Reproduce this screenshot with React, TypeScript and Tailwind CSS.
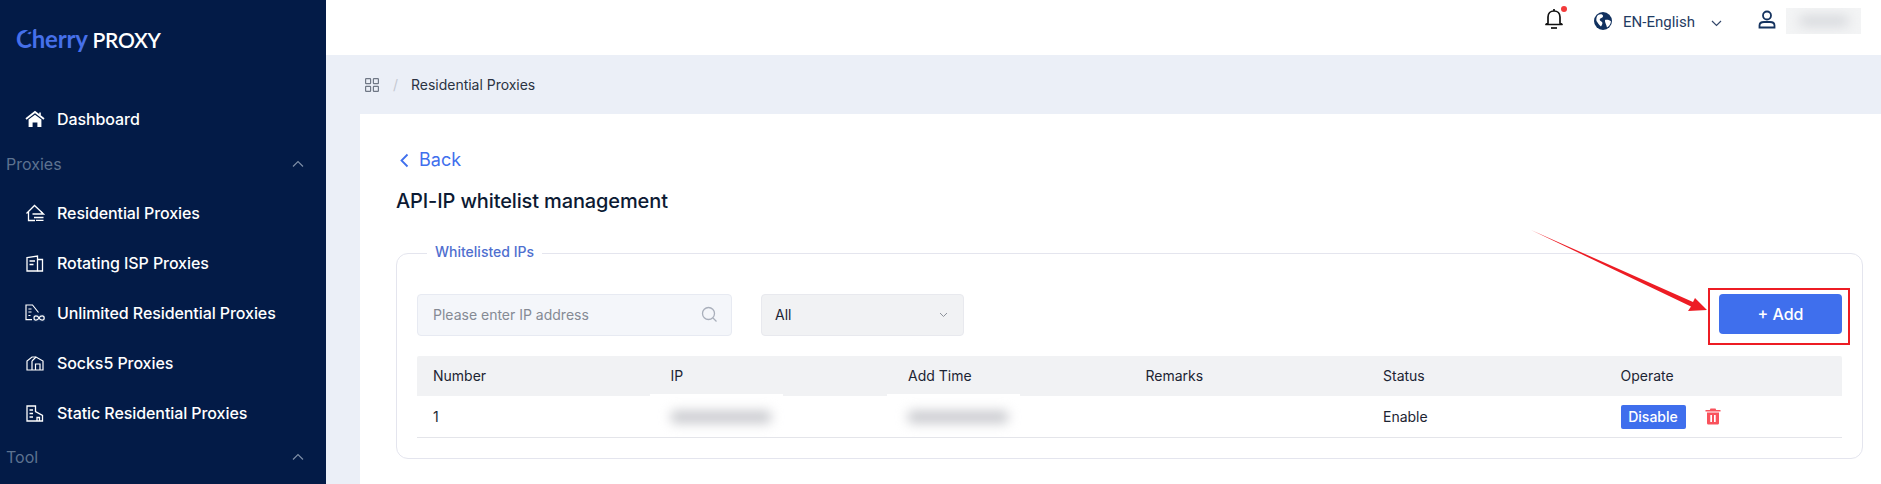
import React from "react";

const inter = { fontFamily: "Inter, sans-serif" };

function HomeSolid() {
  return (
    <svg width="20" height="18" viewBox="0 0 20 18" fill="none">
      <path d="M1 9 L10 2 L19 9" stroke="#fff" strokeWidth="1.8" />
      <path d="M15 2.5 V5" stroke="#fff" strokeWidth="1.6" />
      <path d="M3.6 9.6 L10 4.7 L16.4 9.6 V17 H12.4 V12.6 H7.6 V17 H3.6 Z" fill="#fff" />
    </svg>
  );
}
function HomeLine() {
  return (
    <svg width="20" height="18" viewBox="0 0 20 18" fill="none" stroke="#fff" strokeWidth="1.3">
      <path d="M1.5 9.5 L9.5 1.5 L17.5 9" />
      <path d="M3.5 8 V16.5 H10" />
      <path d="M7.5 10 H18.5 L16 7.8" />
      <path d="M18.5 13.5 H9 M18.5 16.3 H11" />
    </svg>
  );
}
function DocColumn() {
  return (
    <svg width="18" height="17" viewBox="0 0 18 17" fill="none" stroke="#fff" strokeWidth="1.3">
      <path d="M1 2.6 L11.5 1 V16 H1 Z" />
      <path d="M11.5 4.5 H16.5 V16 H11.5" />
      <path d="M3.5 6 H9 M3.5 9.5 H7.5" />
    </svg>
  );
}
function DocInfinity() {
  return (
    <svg width="20" height="18" viewBox="0 0 20 18" fill="none" stroke="#fff" strokeWidth="1.2">
      <path d="M7 15.6 H1 V1 H7.5 L13.5 8.5" />
      <path d="M3.4 5 H6.5 M3.4 8 H6.5 M3.4 11.5 H5.5" />
      <rect x="8" y="10" width="12" height="8" fill="#0c2552" stroke="none" />
      <path d="M14 14 C12.6 11.2 9 11.2 9 14 C9 16.8 12.6 16.8 14 14 C15.4 11.2 19.2 11.2 19.2 14 C19.2 16.8 15.4 16.8 14 14 Z" />
    </svg>
  );
}
function Building() {
  return (
    <svg width="18" height="15" viewBox="0 0 18 15" fill="none" stroke="#fff" strokeWidth="1.2">
      <path d="M1 14 V5 L6 1 H10 L17 5 V14 Z" />
      <path d="M6 14 V5 M6 5 L10 1" />
      <path d="M9.5 14 V8 H14 V14" />
    </svg>
  );
}
function DocHouse() {
  return (
    <svg width="18" height="17" viewBox="0 0 18 17" fill="none" stroke="#fff" strokeWidth="1.3">
      <path d="M1 16 V1 H9.5 V6.5 L16.5 10.5 V16 Z" />
      <path d="M3.5 5 H7 M3.5 8.5 H7 M3.5 12 H7" />
      <path d="M11 16 V12.5 H13.5 V16" />
    </svg>
  );
}
function Chevron({ className, color }: { className?: string; color: string }) {
  return (
    <svg className={className} width="12" height="8" viewBox="0 0 12 8" fill="none" stroke={color} strokeWidth="1.2">
      <path d="M1 6.5 L6 1.5 L11 6.5" />
    </svg>
  );
}

function NavItem({ icon, label }: { icon: React.ReactNode; label: string }) {
  return (
    <div className="flex h-[50px] shrink-0 items-center pl-[25px]">
      <span className="flex w-[20px] justify-center">{icon}</span>
      <span className="ml-[12px] text-[16px] font-medium tracking-[-0.08px] text-white">{label}</span>
    </div>
  );
}
function Group({ label, className }: { label: string; className?: string }) {
  return (
    <div className={`flex h-[40px] shrink-0 items-center justify-between pl-[6px] pr-[22px] ${className ?? ""}`}>
      <span className="text-[16px] text-[#5d7290]">{label}</span>
      <Chevron color="#7d8da6" />
    </div>
  );
}

function Sidebar() {
  return (
    <aside className="flex h-full w-[326px] shrink-0 flex-col overflow-hidden bg-[#031b47]">
      <div className="flex h-[94px] shrink-0 items-baseline pl-[16px] pt-[27px]">
        <span className="relative text-[24px] font-bold leading-none tracking-[-0.2px] text-[#4670ea]" style={{ fontFamily: "Lato, sans-serif" }}>
          Cherry
          <svg className="absolute left-[7px] top-[0px]" width="12" height="9" viewBox="0 0 12 9" fill="none" stroke="#031b47" strokeWidth="2">
            <path d="M1 8 C3 4 8 4 11 1" />
          </svg>
        </span>
        <span className="ml-[5px] text-[21px] font-semibold leading-none tracking-[-0.3px] text-white" style={{ fontFamily: "Lato, sans-serif" }}>PROXY</span>
      </div>
      <NavItem icon={<HomeSolid />} label="Dashboard" />
      <Group label="Proxies" className="mb-[4px]" />
      <NavItem icon={<HomeLine />} label="Residential Proxies" />
      <NavItem icon={<DocColumn />} label="Rotating ISP Proxies" />
      <NavItem icon={<DocInfinity />} label="Unlimited Residential Proxies" />
      <NavItem icon={<Building />} label="Socks5 Proxies" />
      <NavItem icon={<DocHouse />} label="Static Residential Proxies" />
      <Group label="Tool" className="-mt-[1px]" />
    </aside>
  );
}

function Header() {
  return (
    <header className="flex h-[55px] shrink-0 items-start justify-end bg-white pr-[20px]">
      <div className="relative mt-[8px]">
        <svg width="20" height="21" viewBox="0 0 20 21" fill="none" stroke="#111" strokeWidth="1.7">
          <path d="M4 15 V9 C4 5.5 6.5 3 10 3 C13.5 3 16 5.5 16 9 V15 L18 16.5 H2 Z" strokeLinejoin="round" />
          <path d="M10 1 V3" />
          <path d="M7 20 H13" />
        </svg>
        <span className="absolute right-[-3px] top-[-2px] h-[6px] w-[6px] rounded-full bg-[#f33a3a]" />
      </div>
      <svg className="ml-[29px] mt-[11px]" width="20" height="20" viewBox="0 0 20 20">
        <circle cx="10" cy="10" r="9" fill="#11315f" />
        <path d="M5 4 C7 3 10 3 10 5 C10 7 8 6.5 7 8 C6 9.5 8 10 9 11 C10 12 9 14 8 15.5 C6 14 5 12 3.5 10 C3 8 3.5 5.5 5 4 Z M12 9 C14 8.5 17 9 18 10.5 C17.5 13.5 16 15.5 14 16.5 C13.5 14 11.5 11 12 9 Z" fill="#fff" />
      </svg>
      <span className="ml-[10px] mt-[13px] text-[15px] leading-[18px] text-[#1f3b63]" style={{ fontFamily: "Roboto, sans-serif" }}>EN-English</span>
      <svg className="ml-[16px] mt-[20px]" width="11" height="7" viewBox="0 0 11 7" fill="none" stroke="#33476a" strokeWidth="1.2">
        <path d="M1 1 L5.5 5.5 L10 1" />
      </svg>
      <svg className="ml-[36px] mt-[10px]" width="18" height="19" viewBox="0 0 18 19" fill="none" stroke="#15335f" strokeWidth="1.8">
        <circle cx="9" cy="5.5" r="4" />
        <path d="M1.5 17.5 V15.5 C1.5 13 3.5 12 6 12 H12 C14.5 12 16.5 13 16.5 15.5 V17.5 Z" />
      </svg>
      <div className="ml-[10px] mt-[8px] flex h-[26px] w-[75px] items-center justify-center overflow-hidden bg-[#f3f4f5]">
        <div className="h-[10px] w-[50px] rounded-full bg-[#d4d6da] blur-[6px]" />
      </div>
    </header>
  );
}

function BlurText() {
  return (
    <div className="flex h-[38px] w-[133px] -translate-x-[21px] -translate-y-[4px] items-center bg-white pl-[21px]">
      <div className="h-[12px] w-[100px] translate-y-[4px] rounded-sm bg-[#c6c7cc] blur-[6px]" />
    </div>
  );
}

function Table() {
  const heads = ["Number", "IP", "Add Time", "Remarks", "Status", "Operate"];
  return (
    <div className="mt-[20px]">
      <div className="grid h-[40px] grid-cols-6 items-center rounded-t-[2px] bg-[#f1f2f4] pb-[1px] text-[14px] text-[#1c2433]">
        {heads.map((h) => (
          <div key={h} className="pl-[16px]">{h}</div>
        ))}
      </div>
      <div className="grid h-[42px] grid-cols-6 items-center border-b border-[#e4e5ea] text-[14px] text-[#1c2433]">
        <div className="pl-[16px]">1</div>
        <div className="pl-[16px]"><BlurText /></div>
        <div className="pl-[16px]"><BlurText /></div>
        <div />
        <div className="pl-[16px]">Enable</div>
        <div className="flex items-center pl-[16px]">
          <button className="flex h-[24px] w-[65px] items-center justify-center rounded-[2px] bg-[#3f6fed] text-[14px] font-medium text-white">Disable</button>
          <svg className="ml-[19px]" width="16" height="17" viewBox="0 0 16 17">
            <path d="M5.5 0.5 H10.5 L11.2 2 H15.5 V3.6 H0.5 V2 H4.8 Z" fill="#f9525c" />
            <path fillRule="evenodd" d="M2 4.6 H14 V15 C14 16 13.2 16.6 12.4 16.6 H3.6 C2.8 16.6 2 16 2 15 Z M5.3 7 V14 H7 V7 Z M9 7 V14 H10.7 V7 Z" fill="#f9525c" />
          </svg>
        </div>
      </div>
    </div>
  );
}

function Content() {
  return (
    <section className="relative ml-[34px] flex-1 bg-white pl-[36px] pr-[18px]">
      <div className="mt-[36px] flex h-[20px] items-center text-[#3f6fed]">
        <svg className="ml-[3px]" width="10" height="15" viewBox="0 0 10 15" fill="none" stroke="#3f6fed" strokeWidth="1.8">
          <path d="M8.5 1.5 L2.5 7.5 L8.5 13.5" />
        </svg>
        <span className="ml-[10px] text-[18px] leading-none">Back</span>
      </div>
      <h1 className="mt-[19px] text-[20px] font-medium leading-[24px] tracking-[-0.13px] text-[#0c1a33]">API-IP whitelist management</h1>
      <fieldset className="mt-[32px] h-[214px] rounded-[12px] border border-[#e4e5ee] px-[20px]">
        <legend className="ml-[10px] -translate-y-[2px] px-[8px] text-[14px] font-medium leading-[17px] text-[#4f6fcf]">Whitelisted IPs</legend>
        <div className="mt-[32px] flex items-start">
          <div className="flex h-[42px] w-[315px] items-center justify-between rounded-[4px] border border-[#e7eaf2] bg-[#f4f6fa] pb-[1px] pl-[15px] pr-[13px]">
            <span className="text-[14px] text-[#858a94]">Please enter IP address</span>
            <svg width="17" height="17" viewBox="0 0 17 17" fill="none" stroke="#a9afbb" strokeWidth="1.3">
              <circle cx="7.5" cy="7.5" r="6" />
              <path d="M12 12 L15.5 15.5" />
            </svg>
          </div>
          <div className="ml-[29px] flex h-[42px] w-[203px] items-center justify-between rounded-[4px] border border-[#e8e9ee] bg-[#f1f2f4] pb-[1px] pl-[13px] pr-[15px]">
            <span className="text-[14px] text-[#1c2433]">All</span>
            <svg width="9" height="6" viewBox="0 0 9 6" fill="none" stroke="#8d929b" strokeWidth="1">
              <path d="M1 1 L4.5 4.5 L8 1" />
            </svg>
          </div>
          <button className="ml-auto h-[40px] w-[123px] rounded-[4px] bg-[#3f6fed] text-[16px] font-medium text-white">+ Add</button>
        </div>
        <Table />
      </fieldset>
      <div className="absolute left-[1348px] top-[174px] h-[57px] w-[142px] border-[2px] border-[#ed1c24]" />
      <svg className="absolute left-[1170px] top-[115px]" width="180" height="90" viewBox="0 0 180 90">
        <path d="M1 1 L163 73 L165 69 L177 81 L158 82 L161 77.5 Z" fill="#ed1c24" />
      </svg>
    </section>
  );
}

export default function App() {
  return (
    <div className="flex h-[484px] w-[1881px] overflow-hidden bg-[#ebeff7]" style={inter}>
      <Sidebar />
      <main className="flex min-w-0 flex-1 flex-col">
        <Header />
        <div className="flex h-[59px] shrink-0 items-center pl-[39px] text-[14px] text-[#2b3342]">
          <svg width="14" height="14" viewBox="0 0 14 14" fill="none" stroke="#6f7785" strokeWidth="1.2">
            <rect x="0.6" y="0.6" width="5" height="5" rx="0.6" />
            <rect x="8.4" y="0.6" width="5" height="5" rx="0.6" />
            <rect x="0.6" y="8.4" width="5" height="5" rx="0.6" />
            <rect x="8.4" y="8.4" width="5" height="5" rx="0.6" />
          </svg>
          <span className="ml-[14px] text-[#c5c9d2]">/</span>
          <span className="ml-[13px] tracking-[-0.02px]">Residential Proxies</span>
        </div>
        <Content />
      </main>
    </div>
  );
}
